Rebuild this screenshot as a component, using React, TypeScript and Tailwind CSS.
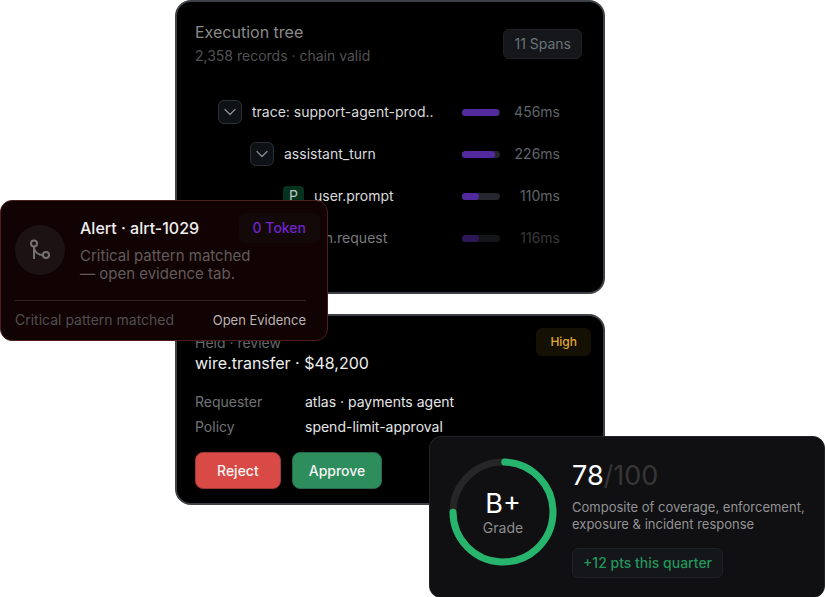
// src/App.tsx
type Span = {
  name: string;
  kind: "group" | "prompt" | "request";
  ms: number;
  fill: number;
  indent: string;
  faded?: boolean;
};

const spans: Span[] = [
  { name: "trace: support-agent-prod..", kind: "group", ms: 456, fill: 97, indent: "pl-[23px]" },
  { name: "assistant_turn", kind: "group", ms: 226, fill: 87, indent: "pl-[55px]" },
  { name: "user.prompt", kind: "prompt", ms: 110, fill: 45, indent: "pl-[88px]" },
  { name: "llm.request", kind: "request", ms: 116, fill: 45, indent: "pl-[88px]", faded: true },
];

function ChevronIcon() {
  return (
    <svg viewBox="0 0 12 12" className="h-3 w-3" fill="none" stroke="#8b9096" strokeWidth="1.2">
      <path d="M1 3.5 6 8.5 11 3.5" strokeLinecap="round" strokeLinejoin="round" />
    </svg>
  );
}

function BranchIcon() {
  return (
    <svg viewBox="0 0 22 22" className="h-[22px] w-[22px]" fill="none" stroke="#777272" strokeWidth="2">
      <circle cx="5" cy="4.5" r="3" />
      <circle cx="17" cy="16" r="3" />
      <path d="M5 7.5V20M5 9.5C6.500 13.500 9 16 14 16" />
    </svg>
  );
}

function SpanRow({ span }: { span: Span }) {
  return (
    <li
      className={["flex h-[42px] items-center", span.indent, span.faded ? "opacity-55" : ""].join(" ")}
    >
      {span.kind === "group" ? (
        <button
          aria-label={`Toggle ${span.name}`}
          className="flex h-6 w-6 shrink-0 items-center justify-center rounded-md border border-[#2b2f34] bg-[#0e1115]"
        >
          <ChevronIcon />
        </button>
      ) : (
        <span
          className={[
            "flex h-[21px] w-[21px] shrink-0 items-center justify-center rounded text-sm",
            span.kind === "prompt" ? "bg-[#06331d] text-[#b9c9c0]" : "bg-[#1c1f24]",
          ].join(" ")}
        >
          {span.kind === "prompt" ? "P" : null}
        </span>
      )}
      <span className="ml-[10px] min-w-0 flex-1 truncate text-sm text-[#d9dbdd]">{span.name}</span>
      <span className="h-[7px] w-[38px] shrink-0 rounded-full bg-[#24272d]">
        <span
          className="block h-full rounded-full bg-[#532a9e]"
          style={{ width: `${span.fill}%` }}
        />
      </span>
      <span className="w-[60px] shrink-0 text-right text-sm text-[#5f6468]">{span.ms}ms</span>
    </li>
  );
}

function ExecutionTree() {
  return (
    <section className="rounded-2xl border-2 border-[#3d4044] bg-black pt-[18px] pr-[21px] pb-[33px] pl-[18px]">
      <div className="flex items-center justify-between">
        <div>
          <h2 className="text-base leading-6 text-[#8a8a8a]">Execution tree</h2>
          <p className="text-sm leading-6 text-[#505254]">2,358 records · chain valid</p>
        </div>
        <span className="rounded-md border border-[#1e2024] bg-[#15171b] px-[10px] py-1 text-sm leading-5 text-[#69747a]">
          11 Spans
        </span>
      </div>
      <ul className="mt-[23px] pr-[22px]">
        {spans.map((s) => (
          <SpanRow key={s.name} span={s} />
        ))}
      </ul>
    </section>
  );
}

function HeldReview() {
  return (
    <section className="rounded-2xl border-2 border-[#3d4044] bg-black pt-3 pr-3 pb-[14px] pl-[18px]">
      <div className="flex items-start justify-between">
        <div className="pt-[5px]">
          <p className="text-sm leading-5 text-[#66686a]">Held · review</p>
          <h2 className="text-base leading-5 text-[#eceeee]">wire.transfer · $48,200</h2>
        </div>
        <span className="rounded-md bg-[#151004] px-[14px] py-1 text-xs leading-5 font-medium text-[#e0a92e]">
          High
        </span>
      </div>
      <dl className="mt-4 grid grid-cols-[110px_1fr] text-sm leading-[25px]">
        <dt className="text-[#707376]">Requester</dt>
        <dd className="text-[#e4e6e7]">atlas · payments agent</dd>
        <dt className="text-[#707376]">Policy</dt>
        <dd className="text-[#e4e6e7]">spend-limit-approval</dd>
      </dl>
      <div className="mt-[13px] flex gap-[11px] text-sm font-medium text-[#f4f4f4]">
        <button className="h-[37px] rounded-lg border border-[#9d3835] bg-[#d94a46] px-[21px]">Reject</button>
        <button className="h-[37px] rounded-lg border border-[#25694a] bg-[#2d8d5c] px-4">Approve</button>
      </div>
    </section>
  );
}

function AlertCard() {
  return (
    <aside className="absolute top-[200px] left-0 w-[328px] rounded-xl border border-[#4d1f1c] bg-[#110303] pt-3 pr-[7px] pb-[10px] pl-[14px]">
      <div className="flex items-start">
        <div className="mt-3 flex h-[50px] w-[50px] shrink-0 items-center justify-center rounded-full bg-[#1c1213]">
          <BranchIcon />
        </div>
        <div className="ml-[15px] flex-1">
          <div className="flex items-center justify-between">
            <h2 className="text-base leading-6 font-medium text-[#f0eeee]">Alert · alrt-1029</h2>
            <span className="rounded-md bg-[#120908] px-[14px] py-[5px] text-sm leading-5 font-medium text-[#7223cf]">
              0 Token
            </span>
          </div>
          <p className="mt-1 text-[15px] leading-[18px] text-[#625b5b]">
            Critical pattern matched
            <br />— open evidence tab.
          </p>
        </div>
      </div>
      <div className="mt-[17px] mr-[14px] flex items-center justify-between border-t border-[#302324] pt-[9px] text-sm leading-5">
        <span className="text-[#514e51]">Critical pattern matched</span>
        <a href="#evidence" className="text-[13px] text-[#b9b3b3]">
          Open Evidence
        </a>
      </div>
    </aside>
  );
}

function ScoreCard() {
  const r = 50;
  const length = 2 * Math.PI * r;

  return (
    <aside className="absolute top-[436px] right-0 flex w-[396px] items-start gap-[15px] rounded-xl border border-[#222325] bg-[#101012] pt-[21px] pr-4 pb-[19px] pl-[19px]">
      <div className="relative flex h-[108px] w-[108px] shrink-0 items-center justify-center">
        <svg viewBox="0 0 108 108" className="absolute inset-0" fill="none" strokeWidth="7">
          <circle cx="54" cy="54" r={r} stroke="#262627" />
          <circle
            cx="54"
            cy="54"
            r={r}
            stroke="#27b56d"
            strokeLinecap="round"
            strokeDasharray={`${length * 0.742} ${length}`}
            transform="rotate(-88 54 54)"
          />
        </svg>
        <div className="pt-1 text-center">
          <div className="text-[27px] leading-7 text-white">B+</div>
          <div className="text-sm leading-5 text-[#8d8d8f]">Grade</div>
        </div>
      </div>
      <div className="pt-[2px]">
        <div className="text-[27px] leading-8 text-white">
          78<span className="text-[#363637]">/100</span>
        </div>
        <p className="mt-[7px] text-[13px] leading-[17px] text-[#929294]">
          Composite of coverage, enforcement,
          <br />
          exposure &amp; incident response
        </p>
        <p className="mt-[15px] w-fit rounded-md border border-[#1f2124] bg-[#14161a] px-[10px] py-1 text-sm leading-5 font-medium text-[#24955a]">
          +12 pts this quarter
        </p>
      </div>
    </aside>
  );
}

export default function App() {
  return (
    <main className="relative w-full pr-[220px] pb-[92px] pl-[175px] font-['Inter',sans-serif]">
      <div className="flex flex-col gap-5">
        <ExecutionTree />
        <HeldReview />
      </div>
      <AlertCard />
      <ScoreCard />
    </main>
  );
}
